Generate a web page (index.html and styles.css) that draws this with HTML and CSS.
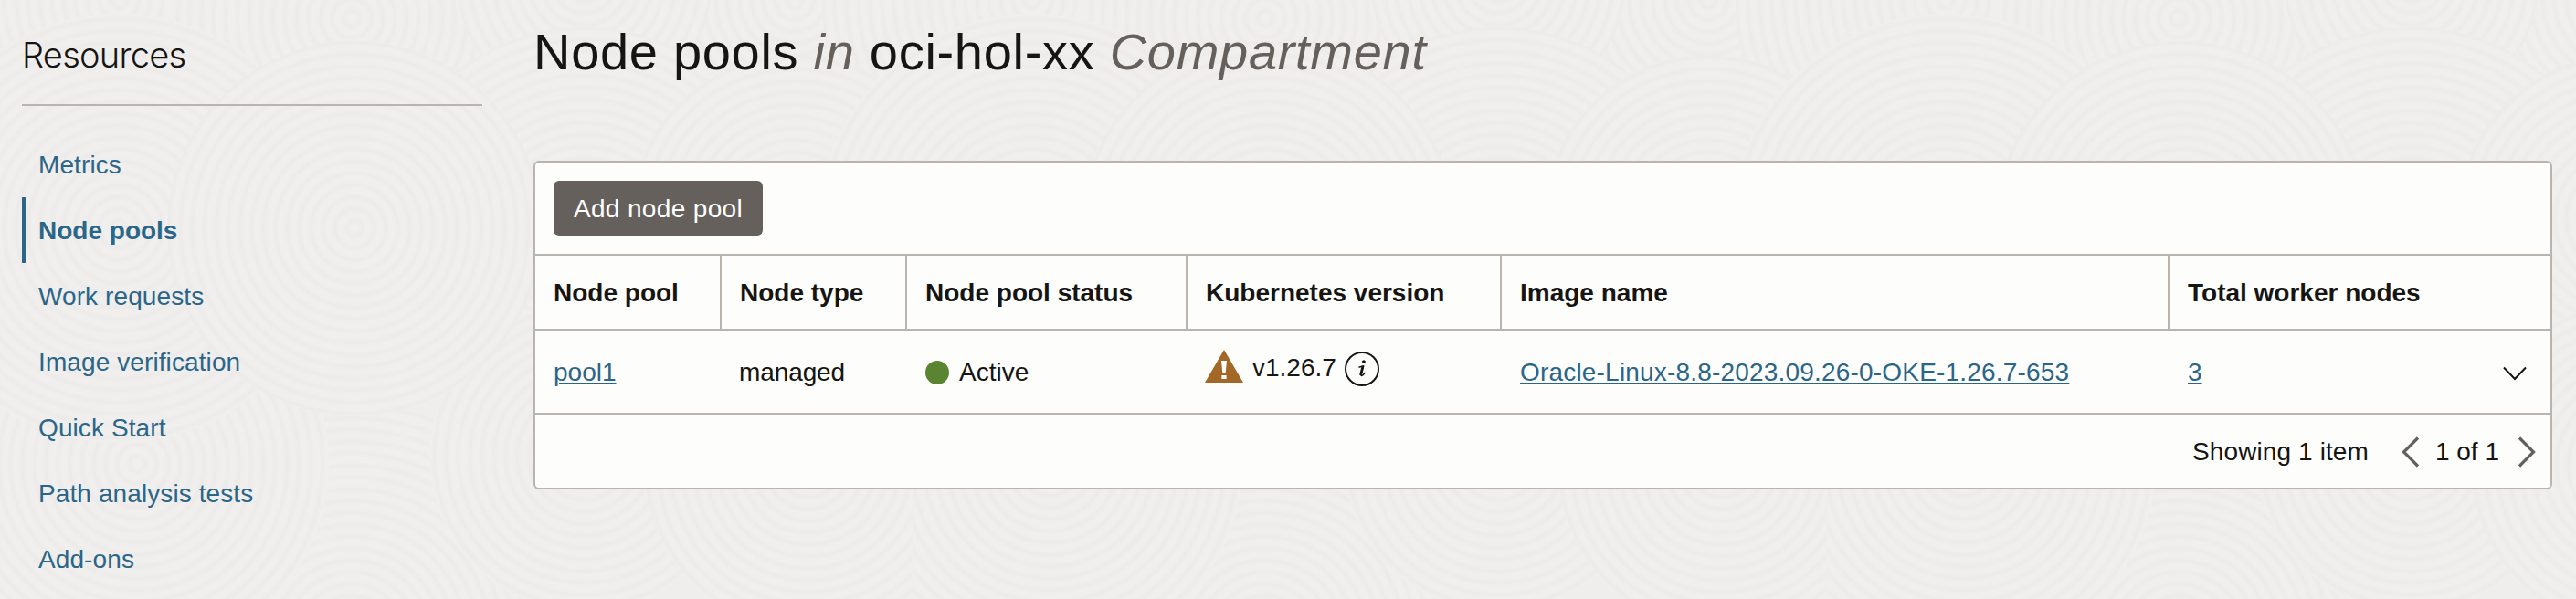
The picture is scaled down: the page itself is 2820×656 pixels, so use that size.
FILE: index.html
```html
<!DOCTYPE html>
<html lang="en">
<head>
<meta charset="utf-8">
<title>Node pools</title>
<link rel="stylesheet" href="styles.css">
</head>
<body>
<svg class="backdrop" width="2820" height="656" aria-hidden="true">
  <defs>
    <radialGradient id="rings" gradientUnits="userSpaceOnUse" cx="0" cy="0" r="13" spreadMethod="repeat">
      <stop offset="0" stop-color="#f0efed"/>
      <stop offset="0.3" stop-color="#f0efed"/>
      <stop offset="0.65" stop-color="#ecebe9"/>
      <stop offset="1" stop-color="#f0efed"/>
    </radialGradient>
    <pattern id="waves" width="1000" height="656" patternUnits="userSpaceOnUse">
      <rect width="1000" height="656" fill="#efeeec"/>
      <g fill="url(#rings)">
        <circle r="260" transform="translate(385 700)"/>
        <circle r="260" transform="translate(870 0)"/>
        <circle r="230" transform="translate(1130 0)"/>
        <circle r="230" transform="translate(130 0)"/>
        <circle r="200" transform="translate(385 20)"/>
        <circle r="140" transform="translate(640 -20)"/>
        <circle r="230" transform="translate(640 260)"/>
        <circle r="180" transform="translate(870 240)"/>
        <circle r="210" transform="translate(1150 508)"/>
        <circle r="210" transform="translate(150 508)"/>
        <circle r="170" transform="translate(640 500)"/>
        <circle r="180" transform="translate(885 510)"/>
        <circle r="235" transform="translate(1130 250)"/>
        <circle r="235" transform="translate(130 250)"/>
        <circle r="205" transform="translate(388 250)"/>
      </g>
    </pattern>
  </defs>
  <rect width="2820" height="656" fill="url(#waves)"/>
</svg>
<div class="page">
  <aside class="sidebar">
    <h2 class="sidebar-title">Resources</h2>
    <nav class="menu">
      <a class="menu-item">Metrics</a>
      <a class="menu-item active">Node pools</a>
      <a class="menu-item">Work requests</a>
      <a class="menu-item">Image verification</a>
      <a class="menu-item">Quick Start</a>
      <a class="menu-item">Path analysis tests</a>
      <a class="menu-item">Add-ons</a>
    </nav>
  </aside>
  <main class="content">
    <h1 class="title">Node pools <em>in</em> oci-hol-xx <em>Compartment</em></h1>
    <section class="card">
      <div class="toolbar"><button class="add">Add node pool</button></div>
      <div class="row head">
        <div class="cell">Node pool</div>
        <div class="cell">Node type</div>
        <div class="cell">Node pool status</div>
        <div class="cell">Kubernetes version</div>
        <div class="cell">Image name</div>
        <div class="cell">Total worker nodes</div>
      </div>
      <div class="row body">
        <div class="cell"><a class="link">pool1</a></div>
        <div class="cell type">managed</div>
        <div class="cell status"><span class="dot"></span>Active</div>
        <div class="cell version">
          <svg class="warn" width="42" height="36" viewBox="0 0 42 36"><path d="M21 0L42 36H0z" fill="#a36728"/><path d="M18 12h6l-1.4 14h-3.2zM18.4 28h5.2v4h-5.2z" fill="#fff"/></svg>
          <span class="version-text">v1.26.7</span>
          <svg class="info" width="38" height="38" viewBox="0 0 38 38" fill="none" stroke="#161513"><circle cx="19" cy="19" r="18" stroke-width="2"/><path d="M15.5 17.2L20.4 15.8L18 25Q17.6 26.8 19 26.3Q20.8 25.4 22.4 22.8" stroke-width="1.5"/><path d="M20 16L17.5 26" stroke-width="2.8"/><ellipse cx="20.9" cy="11" rx="1.6" ry="1.2" fill="#161513" stroke-width=".8"/></svg>
        </div>
        <div class="cell image"><a class="link">Oracle-Linux-8.8-2023.09.26-0-OKE-1.26.7-653</a></div>
        <div class="cell total"><a class="link">3</a>
          <svg class="expand" width="26" height="16" viewBox="0 0 26 16" fill="none" stroke="#161513" stroke-width="2"><path d="M1 1.5L13 14L25 1.5"/></svg>
        </div>
      </div>
      <div class="footer">
        <span class="showing">Showing 1 item</span>
        <svg class="prev" width="20" height="34" viewBox="0 0 20 34" fill="none" stroke="#66605c" stroke-width="3.2"><path d="M18 1.5L2.5 17L18 32.5"/></svg>
        <span class="pages">1 of 1</span>
        <svg class="next" width="20" height="34" viewBox="0 0 20 34" fill="none" stroke="#66605c" stroke-width="3.2"><path d="M2 1.5L17.5 17L2 32.5"/></svg>
      </div>
    </section>
  </main>
</div>
</body>
</html>
```
FILE: styles.css
```css
* { box-sizing: border-box; }
body {
  margin: 0;
  height: 656px;
  overflow: hidden;
  background: #efeeec;
  color: #161513;
  font-family: "Liberation Sans", Arial, sans-serif;
  font-size: 28px;
  line-height: 32px;
}
svg { display: block; flex: none; }
.backdrop { position: absolute; inset: 0; z-index: -1; }
.page {
  display: grid;
  grid-template-columns: 504px 2210px;
  column-gap: 56px;
  padding-left: 24px;
}
.sidebar-title {
  margin: 0;
  height: 116px;
  padding-top: 37px;
  border-bottom: 2px solid #bab4ae;
  font-family: Inter, sans-serif;
  font-size: 38px;
  font-weight: 300;
  line-height: 46px;
  letter-spacing: -0.75px;
}
.menu { padding-top: 28px; }
.menu-item {
  display: flex;
  align-items: center;
  height: 72px;
  padding: 2px 0 0 14px;
  border-left: 4px solid transparent;
  color: #2b6689;
  letter-spacing: 0.1px;
}
.menu-item.active { border-color: #2b6689; font-weight: 700; letter-spacing: 0; }
.title {
  margin: 0;
  height: 176px;
  padding-top: 25px;
  font-size: 56px;
  font-weight: 400;
  line-height: 64px;
  letter-spacing: 0.7px;
  white-space: nowrap;
}
.title em { color: #66605c; }
.card {
  height: 360px;
  border: 2px solid #bab4ae;
  border-radius: 6px;
  background: #fdfdfb;
}
.toolbar { height: 102px; padding: 20px; border-bottom: 2px solid #bab4ae; }
.add {
  display: block;
  width: 229px;
  height: 60px;
  padding: 2px 0 0;
  border: 0;
  border-radius: 6px;
  background: #66605c;
  color: #fff;
  font: inherit;
  letter-spacing: 0.35px;
}
.row {
  display: grid;
  grid-template-columns: 204px 203px 307px 344px 731px 417px;
  border-bottom: 2px solid #bab4ae;
}
.cell { display: flex; align-items: center; padding: 2px 0 0 20px; white-space: nowrap; }
.head { height: 82px; font-weight: 700; }
.head .cell { border-right: 2px solid #bab4ae; }
.head .cell:last-child { border-right: 0; }
.body { height: 92px; }
.body .cell { height: 90px; }
.link {
  color: #2b6689;
  text-decoration: underline;
  text-decoration-thickness: 2px;
  text-underline-offset: 2px;
}
.type { padding-left: 19px; letter-spacing: -0.1px; }
.dot { width: 26px; height: 26px; margin-right: 11px; border-radius: 50%; background: #5b8432; }
.body .version { padding: 0 0 9px 19px; }
.warn { margin: -4px 10px 0 0; }
.info { margin: 3px 0 0 9px; }
.image { letter-spacing: 0.19px; }
.total { justify-content: space-between; }
.body .total { padding-right: 26px; }
.expand { margin-top: 2px; }
.footer { display: flex; align-items: center; justify-content: flex-end; height: 80px; padding: 2px 16px 0 0; }
.showing { letter-spacing: 0.1px; }
.prev { margin: 0 17px 0 36px; }
.next { margin: 0 0 0 20px; }
```
